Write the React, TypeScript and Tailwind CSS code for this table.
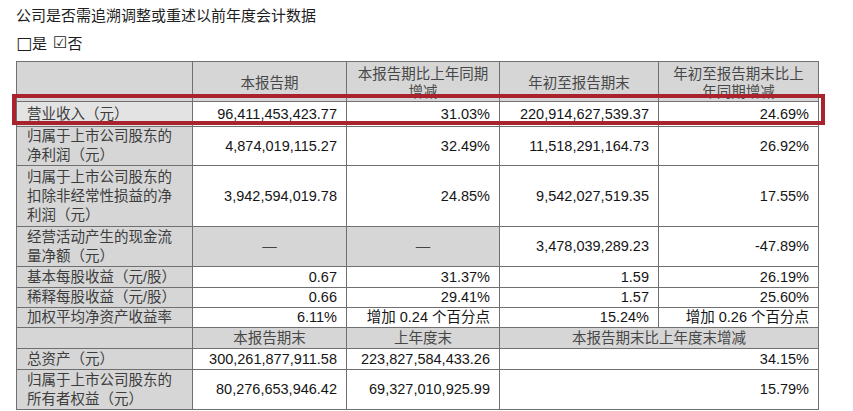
const gray = "bg-[#d6d6d6]";
const cell = "border border-[#707070] p-0";
const num = `${cell} text-right pr-[9px] text-[#151515]`;
const label = `${cell} ${gray} text-left pl-[10px] text-[#3d3d3d]`;
const head = `${cell} ${gray} text-center text-[#474747]`;

type Row = {
  h: string;
  label: React.ReactNode;
  cells: React.ReactNode[];
  grayCells?: number[];
  labelBg?: string;
};

const rows: Row[] = [
  { h: "h-[25px]", label: "营业收入（元）", cells: ["96,411,453,423.77", "31.03%", "220,914,627,539.37", "24.69%"], labelBg: "bg-[#e3e3e3]" },
  { h: "h-[38px]", label: <>归属于上市公司股东的<br />净利润（元）</>, cells: ["4,874,019,115.27", "32.49%", "11,518,291,164.73", "26.92%"] },
  { h: "h-[61px]", label: <>归属于上市公司股东的<br />扣除非经常性损益的净<br />利润（元）</>, cells: ["3,942,594,019.78", "24.85%", "9,542,027,519.35", "17.55%"] },
  { h: "h-[40px]", label: <>经营活动产生的现金流<br />量净额（元）</>, cells: ["—", "—", "3,478,039,289.23", "-47.89%"], grayCells: [0, 1] },
  { h: "h-[21px]", label: "基本每股收益（元/股）", cells: ["0.67", "31.37%", "1.59", "26.19%"] },
  { h: "h-[20px]", label: "稀释每股收益（元/股）", cells: ["0.66", "29.41%", "1.57", "25.60%"] },
  { h: "h-[20px]", label: "加权平均净资产收益率", cells: ["6.11%", "增加 0.24 个百分点", "15.24%", "增加 0.26 个百分点"] },
];

export default function App() {
  return (
    <div
      className="w-[853px] h-[411px] bg-white pl-[16px] pt-[5px] overflow-hidden"
      style={{ fontFamily: '"Liberation Sans", "Noto Sans CJK SC", sans-serif' }}
    >
      <div className="text-[15px] leading-[20px] text-[#1e1e1e]" style={{ fontFamily: '"Noto Sans CJK SC", sans-serif' }}>
        公司是否需追溯调整或重述以前年度会计数据
      </div>
      <div className="mt-[8px] flex items-center text-[15px] leading-[20px] text-[#1e1e1e]">
        <span className="text-[17px] leading-[20px]" style={{ fontFamily: '"DejaVu Sans", sans-serif' }}>□</span>
        <span style={{ fontFamily: '"Noto Sans CJK SC", sans-serif' }}>是</span>
        <span className="ml-[6px] text-[16px] leading-[20px]" style={{ fontFamily: '"DejaVu Sans", sans-serif' }}>☑</span>
        <span style={{ fontFamily: '"Noto Sans CJK SC", sans-serif' }}>否</span>
      </div>

      <div className="relative mt-[8px] w-[802px]">
        <table className="table-fixed w-[802px] border-collapse border border-[#9c9c9c] text-[14.5px] leading-[19px]">
          <colgroup>
            <col className="w-[176px]" />
            <col className="w-[154px]" />
            <col className="w-[153px]" />
            <col className="w-[159px]" />
            <col className="w-[160px]" />
          </colgroup>
          <tbody>
            <tr className="h-[38px]">
              <td className={head}></td>
              <td className={`${head} pt-[3px] leading-[18px]`}>本报告期</td>
              <td className={`${head} pt-[3px] leading-[18px]`}>本报告期比上年同期<br />增减</td>
              <td className={`${head} pt-[3px] leading-[18px]`}>年初至报告期末</td>
              <td className={`${head} pt-[3px] leading-[18px]`}>年初至报告期末比上<br />年同期增减</td>
            </tr>
            {rows.map((r, i) => (
              <tr key={i} className={r.h}>
                <td className={`${label} ${r.labelBg ?? ""}`}>{r.label}</td>
                {r.cells.map((c, j) =>
                  r.grayCells?.includes(j) ? (
                    <td key={j} className={`${cell} ${gray} text-center text-[#444]`}>{c}</td>
                  ) : (
                    <td key={j} className={num}>{c}</td>
                  )
                )}
              </tr>
            ))}
            <tr className="h-[21px]">
              <td className={head}></td>
              <td className={head}>本报告期末</td>
              <td className={head}>上年度末</td>
              <td className={head} colSpan={2}>本报告期末比上年度末增减</td>
            </tr>
            <tr className="h-[21px]">
              <td className={label}>总资产（元）</td>
              <td className={num}>300,261,877,911.58</td>
              <td className={num}>223,827,584,433.26</td>
              <td className={num} colSpan={2}>34.15%</td>
            </tr>
            <tr className="h-[40px]">
              <td className={label}>归属于上市公司股东的<br />所有者权益（元）</td>
              <td className={num}>80,276,653,946.42</td>
              <td className={num}>69,327,010,925.99</td>
              <td className={num} colSpan={2}>15.79%</td>
            </tr>
          </tbody>
        </table>
        <div className="absolute left-[-4px] top-[33px] w-[813px] h-[31px] border-4 border-[#a8232e] pointer-events-none" />
      </div>
    </div>
  );
}
